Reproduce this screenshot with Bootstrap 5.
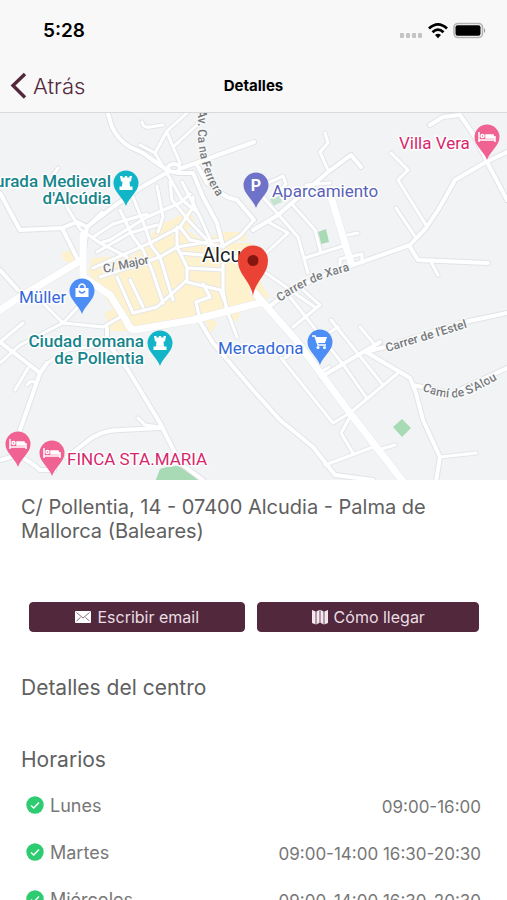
<!DOCTYPE html>
<html lang="es">
<head>
<meta charset="utf-8">
<meta name="viewport" content="width=device-width, initial-scale=1">
<title>Detalles</title>
<link href="https://cdn.jsdelivr.net/npm/bootstrap@5.3.0/dist/css/bootstrap.min.css" rel="stylesheet">
<style>
  :root { --plum: #52293c; --ink: #606060; }
  body { font-family: Inter, "Noto Sans", sans-serif; color: var(--ink); }
  .app-header { background: #f8f8f8; border-bottom: 1px solid #d8dadc; }
  .status-bar { height: 60px; padding: 2px 20px 0 43px; color: #000; }
  .clock { font-size: 19px; font-weight: 600; }
  .title-bar { display: grid; grid-template-columns: 1fr auto 1fr; height: 52px; padding: 0 10px; }
  .back-link { color: var(--plum); font-size: 22px; font-weight: 300; gap: 6px; }
  .screen-title { font-size: 15px; font-weight: 700; color: #000; }
  .scroll-area { scrollbar-width: none; }
  .scroll-area::-webkit-scrollbar { display: none; }
  .town-map { background: #f1f3f4; font-family: Roboto, sans-serif; }
  .copy { padding: 15px 26px 0 21px; }
  .address { font-size: 20px; line-height: 24px; }
  .section-title { font-size: 21px; line-height: 24px; font-weight: 400; color: var(--ink); }
  .actions { display: grid; grid-template-columns: 216fr 221fr; gap: 12px; padding: 0 2px 0 8px; margin: 59px 0 44px; }
  .btn-plum { --bs-btn-bg: var(--plum); --bs-btn-border-color: var(--plum); --bs-btn-color: #eadde4;
    --bs-btn-hover-bg: #3f1d2d; --bs-btn-hover-color: #fff; --bs-btn-active-bg: #3f1d2d; --bs-btn-active-color: #fff;
    font-size: 16px; line-height: 18px; padding: 5px 8px; gap: 6px; border-radius: 4px; }
  .hours { color: #777; line-height: 24px; margin-top: 11px; }
  .hours th, .hours td { height: 47px; padding: 0; font-weight: 400; vertical-align: middle; }
  .hours th { font-size: 18px; }
  .hours td { font-size: 17px; }
  .hours svg { margin: 0 6px 5px 5px; }
</style>
<script src="https://cdn.jsdelivr.net/npm/bootstrap@5.3.0/dist/js/bootstrap.bundle.min.js"></script>
</head>
<body class="vh-100 d-flex flex-column overflow-hidden bg-white">

<header class="app-header flex-shrink-0">
  <div class="status-bar d-flex align-items-center justify-content-between">
    <span class="clock">5:28</span>
    <svg width="88" height="20" viewBox="0 0 88 20" aria-hidden="true">
      <g fill="#c4c4c4"><rect x="1" y="12" width="4" height="5" rx="1"/><rect x="7" y="12" width="4" height="5" rx="1"/><rect x="13" y="12" width="4" height="5" rx="1"/><rect x="19" y="12" width="4" height="5" rx="1"/></g>
      <g fill="none" stroke="#000" stroke-width="2.8"><path d="M30 7.600Q39 -.8 48 7.600"/><path d="M33.500 11.200Q39 6 44.500 11.200"/></g>
      <path d="M36 14Q39 11.500 42 14L39 17.200Z" fill="#000"/>
      <rect x="55" y="2.500" width="28.500" height="14" rx="4" fill="#f8f8f8" stroke="#b4b4b4" stroke-width="1.600"/>
      <rect x="56.500" y="4.200" width="25" height="10.600" rx="2" fill="#000"/>
      <path d="M85 7Q87.500 9.500 85 12Z" fill="#999"/>
    </svg>
  </div>
  <div class="title-bar align-items-center">
    <a href="#" class="back-link d-flex align-items-center text-decoration-none">
      <svg width="17" height="28" viewBox="0 0 17 28" fill="none" stroke="#52293c" stroke-width="3.400" aria-hidden="true"><path d="M15 2L3 13.500L15 25.500"/></svg>
      <span>Atrás</span>
    </a>
    <h1 class="screen-title m-0">Detalles</h1>
    <span></span>
  </div>
</header>

<main class="scroll-area flex-grow-1 overflow-auto">
  <svg class="town-map d-block w-100" viewBox="0 113 507 367" role="img" aria-label="Mapa de Alcúdia">
    <defs>
      <g id="lanes" fill="none" stroke-linecap="round" stroke-linejoin="round">
        <path d="M187 113L167 131L155 153L163 167M140 145L155 153M142 122Q143 128 150 127L163 125M167 132L173 147L180 163M173 147L197 125L203 112"/>
        <path d="M58 168L53 175L67 207L80 229L100 243L127 257M87 227L102 212M93 237L113 224L147 214M110 240L147 217L180 203L190 194M100 243L110 240M97 252L130 233L157 225"/>
        <path d="M120 210L133 237L143 250L152 270L163 303M133 197L145 227L152 247L160 257L173 300M157 186L163 217L158 232M170 182L172 200L190 222L208 241M182 182L200 217L213 246M167 173L182 200L197 212"/>
        <path d="M93 268L150 243L180 227L193 207V197M100 277L160 257L177 247L220 240M180 227L190 240L223 247M177 227V247L180 253L187 267V280L157 307L133 313M180 253L223 257M188 268L223 270"/>
        <path d="M187 282L220 290L227 307M203 284L210 297L196 302L200 320M223 257V290L227 313M217 250L223 257H236L252 285M117 277L133 313M130 280L143 307M223 246L240 236L254 220"/>
        <path d="M325 133L328 143L320 152L328 170M391 153L408 170L398 180L426 225M396 208L416 238M431 262L438 275M348 235L358 233M263 197L298 237L308 273M291 203L315 230L321 253M305 258L346 245M270 223L288 233L266 253"/>
        <path d="M258 193L270 182L283 176L286 184L276 195M306 185L330 183M340 265V259L362 254V263M266 273L316 308M303 290L320 305L293 327M290 297L345 367L366 397M331 320L383 385M330 332L338 327M360 327L375 345M303 345L285 358M321 372L329 367"/>
        <path d="M0 342L23 323M0 363L20 345L63 323L103 327L122 316M43 303L63 323L80 305M47 363L67 350L100 345M28 368L15 390M27 385Q31 379 36 383M138 418L145 425L160 427M67 350L105 345"/>
        <path d="M228 313L237 337M281 358L333 423L350 413L398 373M350 417L341 433L353 453M325 465L373 447M378 450L395 445M440 457L476 453"/>
      </g>
      <g id="streets" fill="none" stroke-linecap="round" stroke-linejoin="round">
        <path d="M107 110L112 127Q118 140 130 147L143 153L167 170M182 168L254 142M197 165L207 183L227 197L237 200L254 220M177 173L193 173L203 197L217 223L223 246"/>
        <path d="M168 172L140 188L113 207L87 227L82 263M0 193L20 230L62 228L77 222L87 227M62 228L78 260"/>
        <ellipse cx="174" cy="168" rx="6" ry="4"/>
        <path d="M430 125L443 117L460 115L475 137L486 160L507 200M507 152L486 162L455 180Q447 195 438 210L426 228L410 245L353 265Q300 282 270 306M253 230L278 215L328 172L351 155L361 167M410 247L418 260L488 263"/>
        <path d="M0 342L40 373L20 430M40 373L47 363M0 270L18 290M107 328V342L128 370L160 423L180 463L203 480M67 457L85 443Q100 430 120 430L160 428M0 460L18 455Q34 464 40 470L54 470M197 317L213 343L253 390L280 420L313 447L335 475L373 480"/>
        <path d="M321 377L380 342M366 352L410 378L416 393L423 420L440 457L436 482M366 352L385 347L460 323L507 313M413 385L440 391L453 393L507 368"/>
      </g>
      <g id="avenues" fill="none" stroke-linecap="round" stroke-linejoin="round">
        <path d="M0 310L20 297L80 261M83 235V277L110 295L127 322Q130 332 140 329L193 320L263 302M254 292L296 340L350 413L405 484M331 197L351 263"/>
      </g>
      <path id="pin" d="M0 23C-3 14-12.500 9-12.500 0A12.500 12.500 0 1 1 12.500 0C12.500 9 3 14 0 23Z"/>
      <g id="tower" fill="#fff"><path d="M-6-7H-3.500V-5.500H-1.200V-7H1.200V-5.500H3.500V-7H6L5-1.500H3.500L4 3.500H6.500V7H-6.500V3.500H-4L-3.500-1.500H-5Z"/></g>
      <g id="bed" fill="none" stroke="#fff" stroke-width="1.500"><path d="M-8-5V5M-8 3H8M8 5V-1"/><circle cx="-4.500" cy="-1" r="1.500"/><path d="M-1-2H6L7 1H-1Z" fill="#fff"/></g>
      <path id="ferrera" d="M198 110V140Q200 160 206 176Q212 192 226 208"/>
      <path id="alou" d="M422 390Q450 404 474 392T520 366"/>
      <path id="xara" d="M280 302Q302 286 325 278L364 266"/>
    </defs>

    <g fill="#fef1ce">
      <path d="M150 237L158 225L172 220L190 208L195 225L186 230L203 240L222 233L224 243H252V262L262 285L270 297L200 318L137 331L122 322L108 302L88 272L92 258L135 255Z"/>
      <path d="M222 232H246V241H224ZM62 253L76 248L82 263L74 268L62 258ZM105 312L117 308L130 331H109ZM205 318L218 322L210 334ZM222 314L241 310L237 322Z"/>
    </g>
    <g fill="#a8dab5">
      <path d="M318 232L326 229L329 242L321 244ZM402 419L411 428L402 437L393 427ZM155 482L160 469Q178 463 190 469L210 482Z"/>
      <path d="M270 199L280 194L282 202L273 206Z" opacity=".6"/>
    </g>
    <use href="#lanes" stroke="#e3e6e9" stroke-width="5"/>
    <use href="#streets" stroke="#e1e4e7" stroke-width="6"/>
    <use href="#avenues" stroke="#e6e8eb" stroke-width="8"/>
    <use href="#lanes" stroke="#fff" stroke-width="3"/>
    <use href="#streets" stroke="#fff" stroke-width="4"/>
    <use href="#avenues" stroke="#fff" stroke-width="7"/>

    <g font-size="12" font-weight="500" fill="#77797c" stroke="#f8f9fa" stroke-width="3" stroke-linejoin="round" paint-order="stroke">
      <text><textPath href="#ferrera">Av. Ca na Ferrera</textPath></text>
      <text transform="translate(104 273) rotate(-12)">C/ Major</text>
      <text><textPath href="#xara">Carrer de Xara</textPath></text>
      <text transform="translate(387 352) rotate(-17)">Carrer de l'Estel</text>
      <text><textPath href="#alou">Camí de S'Alou</textPath></text>
    </g>
    <g font-size="17" stroke="#fff" stroke-width="3" stroke-linejoin="round" paint-order="stroke">
      <g fill="#16858c" font-weight="500" text-anchor="end">
        <text x="111" y="187">Murada Medieval</text><text x="111" y="204">d'Alcúdia</text>
        <text x="144" y="347">Ciudad romana</text><text x="144" y="364">de Pollentia</text>
      </g>
      <text x="399" y="149" fill="#d6286c">Villa Vera</text>
      <text x="67" y="465" fill="#d6286c">FINCA STA.MARIA</text>
      <text x="272" y="197" fill="#5a62b5">Aparcamiento</text>
      <text x="19" y="303" fill="#3468d8">Müller</text>
      <text x="218" y="354" fill="#3468d8">Mercadona</text>
      <text x="202" y="262" fill="#202124" font-size="20">Alcu</text>
    </g>

    <g transform="translate(126 183)"><use href="#pin" fill="#12b5c8"/><use href="#tower"/></g>
    <g transform="translate(160 343)"><use href="#pin" fill="#12b5c8"/><use href="#tower"/></g>
    <g transform="translate(487 137)"><use href="#pin" fill="#f06292"/><use href="#bed"/></g>
    <g transform="translate(18 444)"><use href="#pin" fill="#f06292"/><use href="#bed"/></g>
    <g transform="translate(52 453)"><use href="#pin" fill="#f06292"/><use href="#bed"/></g>
    <g transform="translate(256 185)"><use href="#pin" fill="#6e72c9"/><text y="6" fill="#fff" font-size="16" font-weight="700" text-anchor="middle">P</text></g>
    <g transform="translate(82 291)"><use href="#pin" fill="#4d8df6"/><path d="M-6.500-3H6.500V6H-6.500Z" fill="#fff"/><path d="M-3-3V-5Q0-9 3-5V-3" fill="none" stroke="#fff" stroke-width="1.500"/><path d="M-3 0Q0 4 3 0" fill="none" stroke="#4d8df6" stroke-width="1.400"/></g>
    <g transform="translate(320 342)"><use href="#pin" fill="#4d8df6"/><path d="M-8-6H-5L-2 3H6" fill="none" stroke="#fff" stroke-width="1.500"/><path d="M-5-5H7L5 1H-3Z" fill="#fff"/><circle cx="-2" cy="5.500" r="1.500" fill="#fff"/><circle cx="4.500" cy="5.500" r="1.500" fill="#fff"/></g>
    <path d="M253 296C251 281 238 275 238 260.500A15 15 0 1 1 268 260.500C268 275 255 281 253 296Z" fill="#ea4335"/>
    <circle cx="253" cy="260.500" r="5.500" fill="#85150f"/>
  </svg>

  <div class="copy">
    <p class="address mb-0">C/ Pollentia, 14 - 07400 Alcudia - Palma de Mallorca (Baleares)</p>

    <div class="actions">
      <button type="button" class="btn btn-plum d-flex align-items-center justify-content-center">
        <svg width="16" height="12" viewBox="0 0 16 12" aria-hidden="true"><rect width="16" height="12" rx="1" fill="#fff"/><path d="M1.500 1.500L8 7L14.500 1.500M1.500 10L5.500 6.500M14.500 10L10.500 6.500" fill="none" stroke="#8d7180" stroke-width="1"/></svg>
        <span>Escribir email</span>
      </button>
      <button type="button" class="btn btn-plum d-flex align-items-center justify-content-center">
        <svg width="16" height="16" viewBox="0 0 16 16" fill="#f4e8ee" aria-hidden="true"><path d="M0 1L3.600 2.500V15.500L0 14ZM4.400 2.500L7.600 .8V13.800L4.400 15.500ZM8.400 .8L11.600 2.500V15.500L8.400 13.800ZM12.400 2.500L16 1V14L12.400 15.500Z"/></svg>
        <span>Cómo llegar</span>
      </button>
    </div>

    <h2 class="section-title mb-0">Detalles del centro</h2>
    <h2 class="section-title mt-5 mb-0">Horarios</h2>
    <table class="hours w-100">
      <tbody>
        <tr><th scope="row"><svg width="18" height="18" viewBox="0 0 18 18" aria-hidden="true"><circle cx="9" cy="9" r="8.700" fill="#2ecc71"/><path d="M5 9.500L7.700 12L13 6.500" fill="none" stroke="#fff" stroke-width="1.500"/></svg>Lunes</th><td class="text-end">09:00-16:00</td></tr>
        <tr><th scope="row"><svg width="18" height="18" viewBox="0 0 18 18" aria-hidden="true"><circle cx="9" cy="9" r="8.700" fill="#2ecc71"/><path d="M5 9.500L7.700 12L13 6.500" fill="none" stroke="#fff" stroke-width="1.500"/></svg>Martes</th><td class="text-end">09:00-14:00 16:30-20:30</td></tr>
        <tr><th scope="row"><svg width="18" height="18" viewBox="0 0 18 18" aria-hidden="true"><circle cx="9" cy="9" r="8.700" fill="#2ecc71"/><path d="M5 9.500L7.700 12L13 6.500" fill="none" stroke="#fff" stroke-width="1.500"/></svg>Miércoles</th><td class="text-end">09:00-14:00 16:30-20:30</td></tr>
      </tbody>
    </table>
  </div>
</main>
</body>
</html>
